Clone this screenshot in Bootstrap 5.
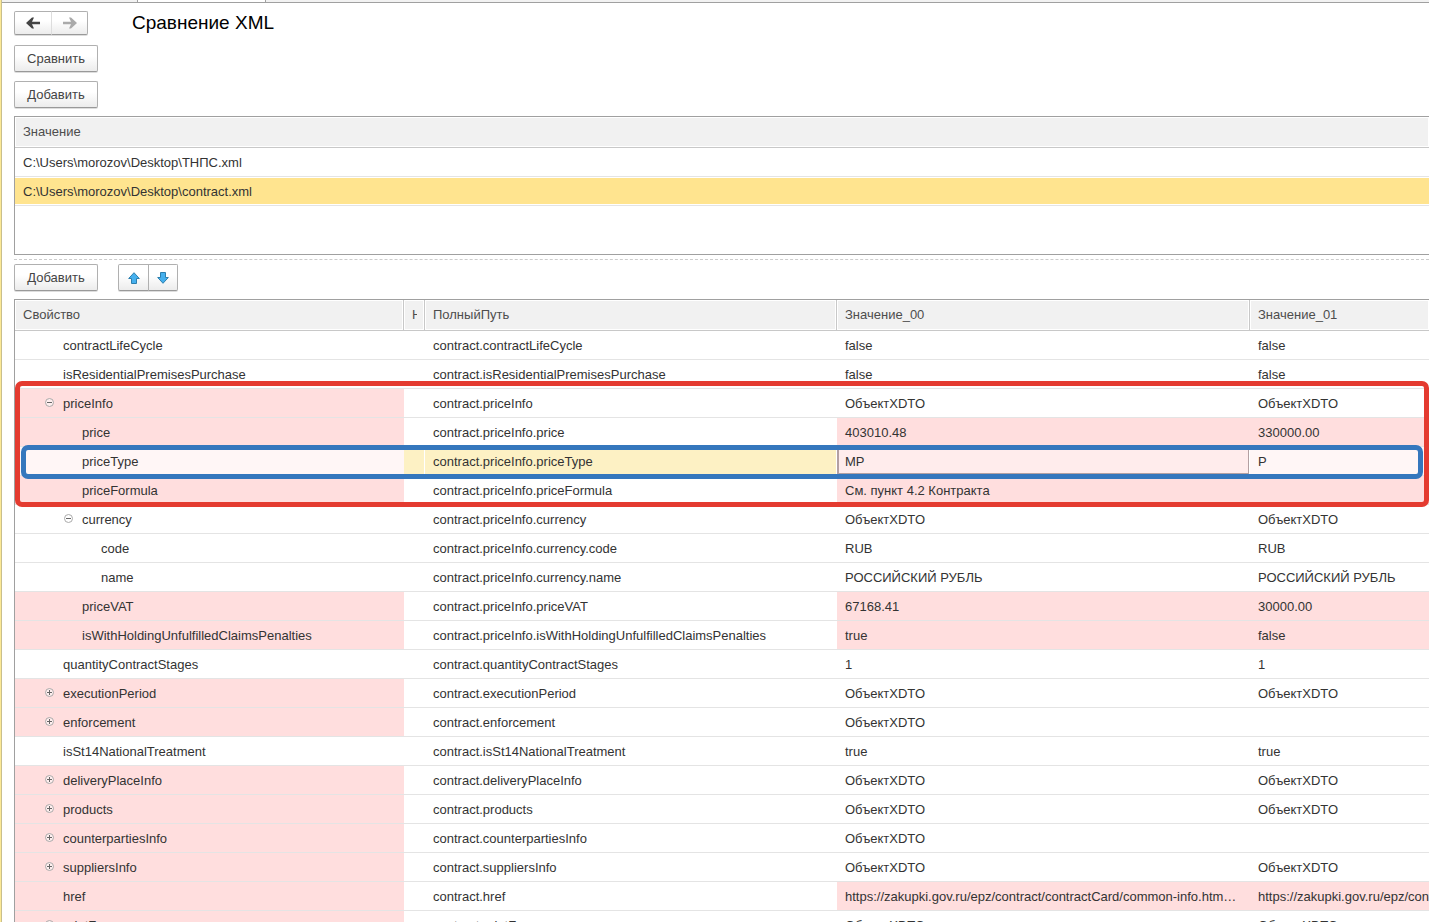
<!DOCTYPE html>
<html lang="ru">
<head>
<meta charset="utf-8">
<meta name="viewport" content="width=device-width, initial-scale=1">
<title>Сравнение XML</title>
<link href="https://cdn.jsdelivr.net/npm/bootstrap@5.3.0/dist/css/bootstrap.min.css" rel="stylesheet">
<style>
body{font-family:"Liberation Sans",Arial,sans-serif;font-size:13px;line-height:16px;color:#333;background:#fff}
.app-shell{height:100vh;overflow:hidden;border-left:1px solid #fce996}
.app-main{border-left:1px solid #c9bf8c;min-height:0}
.tab-strip{height:3px;background:#f2f2f2;border-bottom:1px solid #a0a0a0}
.tab-active{width:129px;margin-left:135px;background:#fff;border:solid #a0a0a0;border-width:0 1px}
.page-title{font-size:19px;line-height:24px;color:#000;font-weight:400;margin:0 0 0 44px}
.btn-form{--bs-btn-font-size:13px;--bs-btn-line-height:16px;--bs-btn-color:#444;--bs-btn-border-color:#b0b0b0;--bs-btn-hover-border-color:#999;--bs-btn-border-radius:2px;--bs-btn-padding-y:0;--bs-btn-padding-x:0;height:27px;background:linear-gradient(#fff 40%,#ececec);border-bottom-color:#999;box-shadow:0 1px 0 #ddd}
.btn-text{width:84px}
.btn-nav{width:38px;height:24px}
.btn-nav:last-child{width:37px;border-left-color:#ddd}
.btn-move{width:31px}
.btn-move:last-child{width:30px}
.form-body{padding:8px 0 0 12px}
.form-actions{gap:9px;padding:10px 0 8px}
.move-group{margin-left:20px}
.grid-box{border:1px solid #a0a0a0;border-right:0}
.files-box{height:139px}
.tree-box{margin-top:8px}
.split-line{border-top:1px dashed #ccc;margin:4px 0}
.data-grid{width:100%;table-layout:fixed;border-collapse:separate;border-spacing:0}
.data-grid th{height:31px;padding:0 8px;font-weight:400;color:#4d4d4d;background:#f1f1f1;border-bottom:1px solid #c8c8c8;border-right:1px solid #c8c8c8;box-shadow:inset 1px 1px #fff,inset -1px -1px #fff;overflow:hidden;white-space:nowrap}
.data-grid th:last-child{border-right:0}
.data-grid th.th-flag{padding-right:7px}
.th-flag span{display:block;overflow:hidden}
.data-grid td{height:29px;padding:2px 10px 0 8px;border-bottom:1px solid #e4e4e4;overflow:hidden;white-space:nowrap;text-overflow:ellipsis}
.data-grid .clip-end{text-overflow:clip;padding-right:0}
.data-grid .picked{background:#ffe48f;box-shadow:inset 0 1px #fff,inset 0 -1px #fff}
.data-grid .differs{background:#ffdede}
.col-prop{width:389px}.col-flag{width:21px}.col-path{width:412px}.col-value{width:413px}
.data-grid .lvl-1{padding-left:30px}
.data-grid .lvl-2{padding-left:49px}
.data-grid .lvl-3{padding-left:68px}
.tree-mark{display:inline-block;width:9px;height:9px;margin-right:9px;padding:0;border:0;background:none;vertical-align:1px}
.tree-mark svg{display:block}
.current-row .differs{background:#fff6f6}
.current-row .tinted{background:#fdf1c4;border-right:1px solid #fff}
.data-grid .active-cell{background:#ffecec!important;box-shadow:inset 2px 0 #b3a0a2,inset -1px -2px #b3a0a2;border-right:1px solid #fff}
.mark-frame{position:absolute;pointer-events:none;border:5px solid #e43b30;border-radius:7px}
.frame-red{left:0;right:0;top:81px;height:126px}
.frame-blue{left:6px;right:6px;top:145px;height:34px;border-color:#3577bd}
</style>
</head>
<body>
<div class="app-shell">
<div class="app-main h-100">
<div class="tab-strip d-flex"><div class="tab-active"></div></div>
<main class="form-body">
  <div class="d-flex align-items-center">
    <div class="btn-group">
      <button type="button" class="btn btn-form btn-nav d-flex align-items-center justify-content-center" aria-label="Назад"><svg width="14" height="12" viewBox="0 0 14 12"><path d="M0 6 6 .5H8L6 4.700H14V7.300H6L8 11.500H6Z" fill="#444"/></svg></button>
      <button type="button" class="btn btn-form btn-nav d-flex align-items-center justify-content-center" aria-label="Вперед"><svg width="14" height="12" viewBox="0 0 14 12"><path d="M14 6 8 .5H6L8 4.700H0V7.300H8L6 11.500H8Z" fill="#aaa"/></svg></button>
    </div>
    <h1 class="page-title">Сравнение XML</h1>
  </div>
  <div class="d-flex flex-column align-items-start form-actions">
    <button type="button" class="btn btn-form btn-text">Сравнить</button>
    <button type="button" class="btn btn-form btn-text">Добавить</button>
  </div>
  <div class="grid-box files-box">
    <table class="data-grid">
      <thead><tr><th>Значение</th></tr></thead>
      <tbody>
        <tr><td>C:\Users\morozov\Desktop\ТНПС.xml</td></tr>
        <tr><td class="picked">C:\Users\morozov\Desktop\contract.xml</td></tr>
      </tbody>
    </table>
  </div>
  <div class="split-line"></div>
  <div class="d-flex">
    <button type="button" class="btn btn-form btn-text">Добавить</button>
    <div class="btn-group move-group">
      <button type="button" class="btn btn-form btn-move d-flex align-items-center justify-content-center" aria-label="Вверх"><svg width="12" height="12" viewBox="0 0 12 12"><path d="M6 .7 11.300 6.500H8.500V11.500H3.500V6.500H.7Z" fill="#45b0ee" stroke="#2c7fae"/></svg></button>
      <button type="button" class="btn btn-form btn-move d-flex align-items-center justify-content-center" aria-label="Вниз"><svg width="12" height="12" viewBox="0 0 12 12"><path d="M6 11.300 11.300 5.500H8.500V.5H3.500V5.500H.7Z" fill="#45b0ee" stroke="#2c7fae"/></svg></button>
    </div>
  </div>
  <div class="grid-box tree-box position-relative">
    <table class="data-grid">
      <colgroup><col class="col-prop"><col class="col-flag"><col class="col-path"><col class="col-value"><col></colgroup>
      <thead><tr><th>Свойство</th><th class="th-flag"><span>Н</span></th><th>ПолныйПуть</th><th>Значение_00</th><th>Значение_01</th></tr></thead>
      <tbody id="rows"></tbody>
    </table>
    <div class="mark-frame frame-red"></div>
    <div class="mark-frame frame-blue"></div>
  </div>
</main>
</div>
</div>
<script src="https://cdn.jsdelivr.net/npm/bootstrap@5.3.0/dist/js/bootstrap.bundle.min.js"></script>
<script>
// [level, toggle, name, path, value 0, value 1, name differs, values differ]
const X = 'ОбъектXDTO', url = 'https://zakupki.gov.ru/epz/contract/contractCard/common-info.html';
const data = [
 [1,'','contractLifeCycle','contractLifeCycle','false','false',0,0],
 [1,'','isResidentialPremisesPurchase','isResidentialPremisesPurchase','false','false',0,0],
 [1,'-','priceInfo','priceInfo',X,X,1,0],
 [2,'','price','priceInfo.price','403010.48','330000.00',1,1],
 [2,'','priceType','priceInfo.priceType','MP','P',1,1],
 [2,'','priceFormula','priceInfo.priceFormula','См. пункт 4.2 Контракта','',1,1],
 [2,'-','currency','priceInfo.currency',X,X,0,0],
 [3,'','code','priceInfo.currency.code','RUB','RUB',0,0],
 [3,'','name','priceInfo.currency.name','РОССИЙСКИЙ РУБЛЬ','РОССИЙСКИЙ РУБЛЬ',0,0],
 [2,'','priceVAT','priceInfo.priceVAT','67168.41','30000.00',1,1],
 [2,'','isWithHoldingUnfulfilledClaimsPenalties','priceInfo.isWithHoldingUnfulfilledClaimsPenalties','true','false',1,1],
 [1,'','quantityContractStages','quantityContractStages','1','1',0,0],
 [1,'+','executionPeriod','executionPeriod',X,X,1,0],
 [1,'+','enforcement','enforcement',X,'',1,0],
 [1,'','isSt14NationalTreatment','isSt14NationalTreatment','true','true',0,0],
 [1,'+','deliveryPlaceInfo','deliveryPlaceInfo',X,X,1,0],
 [1,'+','products','products',X,X,1,0],
 [1,'+','counterpartiesInfo','counterpartiesInfo',X,'',1,0],
 [1,'+','suppliersInfo','suppliersInfo',X,X,1,0],
 [1,'','href','href',url.slice(0, -1) + '…',url,1,1],
 [1,'+','printForm','printForm',X,X,1,0]
];
const mark = t => t
  ? `<button type="button" class="tree-mark" aria-label="${t === '+' ? 'Развернуть' : 'Свернуть'}"><svg width="9" height="9" viewBox="0 0 9 9"><circle cx="4.5" cy="4.500" r="4" fill="#fff" fill-opacity=".5" stroke="#aaa"/><path d="M2 4.500H7${t === '+' ? 'M4.500 2V7' : ''}" stroke="#666"/></svg></button>`
  : '<span class="tree-mark"></span>';
document.getElementById('rows').innerHTML = data.map(([l,t,n,p,a,b,d,v]) => {
  const cur = n === 'priceType';
  return `<tr class="${cur ? 'current-row' : ''}"><td class="lvl-${l} ${d ? 'differs' : ''}">${mark(t)}${n}</td><td class="${cur ? 'tinted' : ''}"></td><td class="${cur ? 'tinted' : ''}">contract.${p}</td><td class="${v ? 'differs' : ''} ${cur ? 'active-cell' : ''}">${a}</td><td class="clip-end ${v ? 'differs' : ''}">${b}</td></tr>`;
}).join('');
</script>
</body>
</html>
